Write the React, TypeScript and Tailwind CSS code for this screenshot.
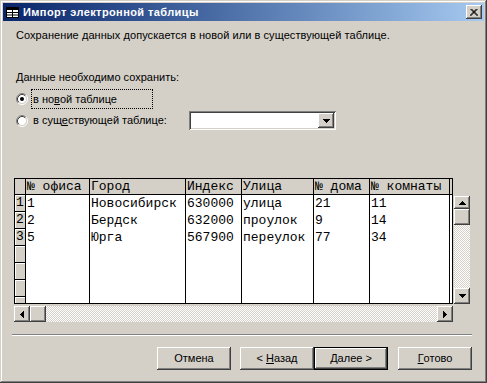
import React from "react";

const raised =
  "bg-[#d4d0c8] shadow-[inset_-1px_-1px_#404040,inset_1px_1px_#ffffff,inset_-2px_-2px_#808080]";
const checker =
  "bg-[image:repeating-conic-gradient(#d4d0c8_0_25%,#ffffff_0_50%)] bg-[length:2px_2px]";

const columns = [
  { title: "№ офиса", w: "w-[64px]" },
  { title: "Город", w: "w-[96px]" },
  { title: "Индекс", w: "w-[56px]" },
  { title: "Улица", w: "w-[72px]" },
  { title: "№ дома", w: "w-[56px]" },
  { title: "№ комнаты", w: "w-[80px]" },
];

const rows = [
  ["1", "Новосибирск", "630000", "улица", "21", "11"],
  ["2", "Бердск", "632000", "проулок", "9", "14"],
  ["5", "Юрга", "567900", "переулок", "77", "34"],
];

const Radio = ({ checked }: { checked?: boolean }) => (
  <svg width="12" height="12" viewBox="0 0 12 12" className="shrink-0">
    <circle cx="6" cy="6" r="4.5" fill="#ffffff" />
    <path d="M2.11 9.89 A5.5 5.5 0 0 1 9.89 2.11" stroke="#808080" fill="none" />
    <path d="M9.89 2.11 A5.5 5.5 0 0 1 2.11 9.89" stroke="#ffffff" fill="none" />
    <path d="M2.82 9.18 A4.5 4.5 0 0 1 9.18 2.82" stroke="#404040" fill="none" />
    <path d="M9.18 2.82 A4.5 4.5 0 0 1 2.82 9.18" stroke="#d4d0c8" fill="none" />
    {checked && <circle cx="6" cy="6" r="2" fill="#000000" />}
  </svg>
);

const Arrow = ({ dir }: { dir: "up" | "down" | "left" | "right" }) => {
  const d = {
    up: "M0 4 L3.5 0 L7 4 Z",
    down: "M0 0 L7 0 L3.5 4 Z",
    left: "M4 0 L4 7 L0 3.5 Z",
    right: "M0 0 L4 3.5 L0 7 Z",
  }[dir];
  const vertical = dir === "up" || dir === "down";
  return (
    <svg width={vertical ? 7 : 4} height={vertical ? 4 : 7} viewBox={vertical ? "0 0 7 4" : "0 0 4 7"}>
      <path d={d} fill="#000000" shapeRendering="crispEdges" />
    </svg>
  );
};

const Button = ({ children, isDefault }: { children: React.ReactNode; isDefault?: boolean }) => (
  <div
    className={`w-[74px] h-[23px] flex items-center justify-center ${
      isDefault
        ? "bg-[#d4d0c8] border border-black shadow-[inset_-1px_-1px_#404040,inset_1px_1px_#ffffff,inset_-2px_-2px_#808080]"
        : raised
    }`}
  >
    {children}
  </div>
);

export default function App() {
  return (
    <div className="w-[487px] h-[383px] bg-[#d4d0c8] p-[3px] flex flex-col text-[11px] leading-[13px] text-black font-['Liberation_Sans',sans-serif] shadow-[inset_-1px_-1px_#404040,inset_1px_1px_#d4d0c8,inset_-2px_-2px_#808080,inset_2px_2px_#ffffff]">
      {/* title bar */}
      <div className="h-[18px] flex items-center bg-linear-to-r from-[#0a246a] to-[#a6caf0]">
        <svg width="13" height="11" viewBox="0 0 13 11" className="ml-[3px]">
          <rect x="0.5" y="0.5" width="12" height="10" fill="#ffffff" stroke="#000000" />
          <rect x="1" y="1" width="11" height="2" fill="#000000" />
          <path d="M6.5 1 V10 M1 5.5 H12 M1 8 H12" stroke="#000000" />
        </svg>
        <span className="ml-[4px] font-bold text-white tracking-[0.4px]">Импорт электронной таблицы</span>
        <div className={`ml-auto mr-[2px] w-[16px] h-[14px] flex items-center justify-center ${raised}`}>
          <svg width="8" height="7" viewBox="0 0 8 7">
            <path d="M0.5 0 L7.5 7 M1.5 0 L8 6.5 M7.5 0 L0.5 7 M6.5 0 L0 6.5" stroke="#000000" strokeWidth="1" />
          </svg>
        </div>
      </div>

      {/* body */}
      <div className="flex-1 flex flex-col pl-[11px]">
        <p className="mt-[8px] ml-[2px] tracking-[0.06px]">
          Сохранение данных допускается в новой или в существующей таблице.
        </p>
        <p className="mt-[29px] ml-[2px]">Данные необходимо сохранить:</p>

        <div className="mt-[5px] ml-[2px] h-[20px] flex items-center">
          <Radio checked />
          <span className="ml-[3px] h-[20px] w-[122px] px-[1px] flex items-center border border-dotted border-black">
            в но<span className="underline">в</span>ой таблице
          </span>
        </div>
        <div className="mt-[2px] ml-[2px] h-[19px] flex items-center">
          <Radio />
          <span className="ml-[5px] w-[156px]">
            в сущ<span className="underline">е</span>ствующей таблице:
          </span>
          <div className="w-[147px] h-[19px] bg-white flex justify-end p-[2px] shadow-[inset_1px_1px_#808080,inset_-1px_-1px_#ffffff,inset_2px_2px_#404040,inset_-2px_-2px_#d4d0c8]">
            <div className={`w-[16px] h-full flex items-center justify-center ${raised}`}>
              <Arrow dir="down" />
            </div>
          </div>
        </div>

        {/* datasheet */}
        <div className="mt-[48px] flex">
          <div className="flex flex-col">
            <div className="flex w-[439px] h-[126px] overflow-hidden border-l border-t border-b border-black bg-white font-['Liberation_Mono',monospace] text-[13px] leading-[16px]">
              <div className="w-[11px] shrink-0 flex flex-col border-r border-black bg-[#d4d0c8]">
                <div className="h-[16px] shrink-0 border-b border-black" />
                {Array.from({ length: 7 }).map((_, i) => (
                  <div
                    key={i}
                    className="h-[17px] shrink-0 border-b border-black shadow-[inset_1px_1px_#ffffff] flex items-center justify-center"
                  >
                    {rows[i]?.[0] ? String(i + 1) : ""}
                  </div>
                ))}
              </div>
              {columns.map((col, c) => (
                <div key={col.title} className={`${col.w} shrink-0 flex flex-col border-r border-black`}>
                  <div className="h-[16px] shrink-0 border-b border-black bg-[#d4d0c8] pl-[1px] whitespace-nowrap">
                    {col.title}
                  </div>
                  {rows.map((r, i) => (
                    <div key={i} className="h-[17px] shrink-0 pl-[1px] pt-[1px] whitespace-nowrap">
                      {r[c]}
                    </div>
                  ))}
                </div>
              ))}
              <div className="w-[3px] shrink-0 flex flex-col border-r border-black">
                <div className="h-[16px] shrink-0 border-b border-black bg-[#d4d0c8]" />
              </div>
            </div>
            <div className="mt-[2px] w-[439px] h-[16px] flex">
              <div className={`w-[16px] h-[16px] flex items-center justify-center ${raised}`}>
                <Arrow dir="left" />
              </div>
              <div className={`w-[16px] h-[16px] ${raised}`} />
              <div className={`flex-1 ${checker}`} />
              <div className={`w-[16px] h-[16px] flex items-center justify-center ${raised}`}>
                <Arrow dir="right" />
              </div>
            </div>
          </div>
          <div className="ml-[1px] mt-[18px] w-[16px] h-[108px] flex flex-col">
            <div className={`h-[13px] flex items-center justify-center ${raised}`}>
              <Arrow dir="up" />
            </div>
            <div className={`h-[16px] ${raised}`} />
            <div className={`flex-1 ${checker}`} />
            <div className={`h-[16px] flex items-center justify-center ${raised}`}>
              <Arrow dir="down" />
            </div>
          </div>
        </div>

        {/* separator */}
        <div className="mt-[12px] -ml-[2px] w-[460px] h-[2px] border-t border-[#808080] border-b border-b-white" />

        {/* buttons */}
        <div className="mt-[11px] flex">
          <div className="ml-[143px]">
            <Button>Отмена</Button>
          </div>
          <div className="ml-[9px]">
            <Button>
              &lt;&nbsp;<span className="underline">Н</span>азад
            </Button>
          </div>
          <Button isDefault>
            <span className="underline">Д</span>алее &gt;
          </Button>
          <div className="ml-[10px]">
            <Button>
              <span className="underline">Г</span>отово
            </Button>
          </div>
        </div>
      </div>
    </div>
  );
}
